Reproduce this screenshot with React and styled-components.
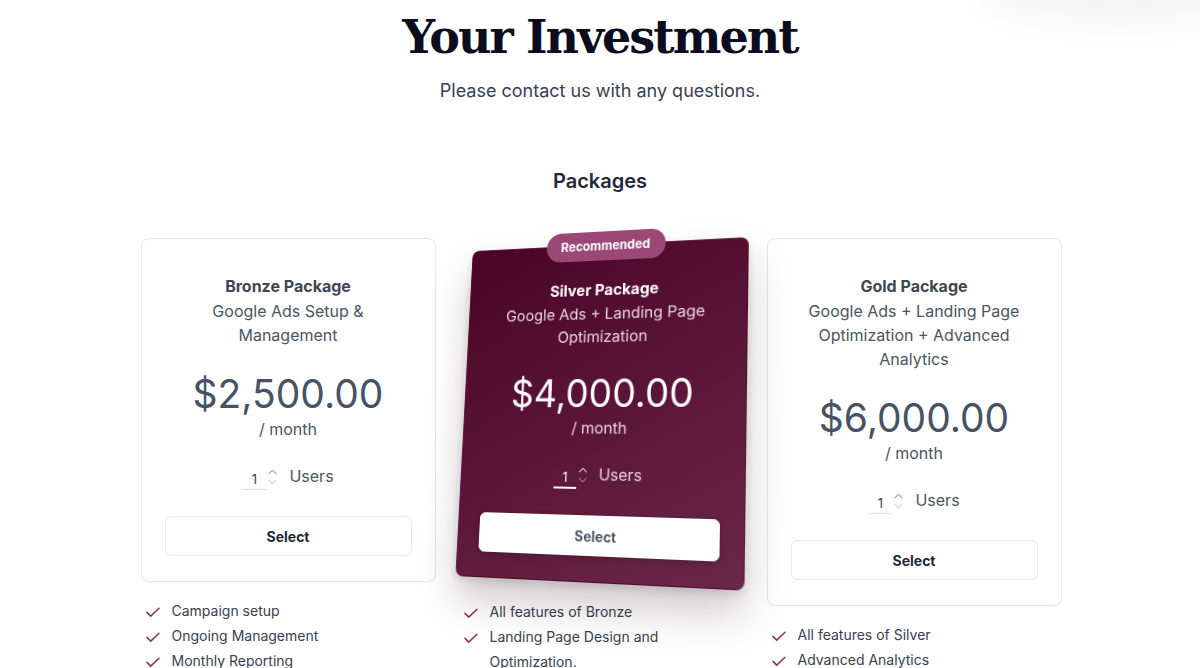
import React from "react";
import styled, { createGlobalStyle } from "styled-components";

const GlobalStyle = createGlobalStyle`
  html, body {
    margin: 0;
    padding: 0;
    background: #ffffff;
    font-family: Inter, "Noto Sans", sans-serif;
    overflow: hidden;
  }
`;

const packages = [
  {
    name: "Bronze Package",
    desc: "Google Ads Setup & Management",
    price: "$2,500.00",
    features: ["Campaign setup", "Ongoing Management", "Monthly Reporting"],
  },
  {
    name: "Silver Package",
    desc: "Google Ads + Landing Page Optimization",
    price: "$4,000.00",
    featured: true,
    features: ["All features of Bronze", "Landing Page Design and Optimization."],
  },
  {
    name: "Gold Package",
    desc: "Google Ads + Landing Page Optimization + Advanced Analytics",
    price: "$6,000.00",
    features: ["All features of Silver", "Advanced Analytics"],
  },
];

const Check = () => (
  <svg width="18" height="18" viewBox="0 0 24 24" fill="none" stroke="#8e2f62" strokeWidth="2" strokeLinecap="round" strokeLinejoin="round">
    <path d="M4 12.5l5 5L20 7" />
  </svg>
);

const Chevron = ({ up, color }) => (
  <svg width="9" height="6" viewBox="0 0 10 6" fill="none" stroke={color} strokeWidth="1.2" strokeLinecap="round" strokeLinejoin="round">
    {up ? <path d="M1 5l4-4 4 4" /> : <path d="M1 1l4 4 4-4" />}
  </svg>
);

const App = () => {
  return (
    <>
      <GlobalStyle />
      <TopGlow />
      <Page>
        <Title>Your Investment</Title>
        <Lead>Please contact us with any questions.</Lead>
        <SectionTitle>Packages</SectionTitle>
        <Grid>
          {packages.map((p) => (
            <Column key={p.name} $featured={p.featured}>
              <Card $featured={p.featured}>
                {p.featured && <Badge>Recommended</Badge>}
                <PackName $featured={p.featured}>{p.name}</PackName>
                <PackDesc $featured={p.featured}>{p.desc}</PackDesc>
                <Price $featured={p.featured}>{p.price}</Price>
                <Per $featured={p.featured}>/ month</Per>
                <UsersRow $featured={p.featured}>
                  <Qty $featured={p.featured}>1</Qty>
                  <Spinner>
                    <Chevron up color={p.featured ? "#e9c9d8" : "#9ca3af"} />
                    <Chevron color={p.featured ? "#a77990" : "#d1d5db"} />
                  </Spinner>
                  <span>Users</span>
                </UsersRow>
                <SelectButton $featured={p.featured}>Select</SelectButton>
              </Card>
              <Features $featured={p.featured}>
                {p.features.map((f) => (
                  <Feature key={f}>
                    <Check />
                    <span>{f}</span>
                  </Feature>
                ))}
              </Features>
            </Column>
          ))}
        </Grid>
      </Page>
    </>
  );
};

const TopGlow = styled.div`
  position: absolute;
  top: -40px;
  right: -60px;
  width: 280px;
  height: 64px;
  border-radius: 50%;
  background: #f5f5f5;
  filter: blur(14px);
  pointer-events: none;
`;

const Page = styled.div`
  position: relative;
  width: 100%;
  display: flex;
  flex-direction: column;
  align-items: center;
  padding-top: 8px;
`;

const Title = styled.h1`
  margin: 0;
  font-family: "DejaVu Serif", "Liberation Serif", serif;
  font-weight: 700;
  font-size: 46px;
  line-height: 58px;
  letter-spacing: -1.9px;
  color: #0b0d1f;
`;

const Lead = styled.p`
  margin: 11px 0 0;
  font-size: 18px;
  line-height: 28px;
  color: #374151;
`;

const SectionTitle = styled.h2`
  margin: 62px 0 0;
  font-size: 20px;
  line-height: 28px;
  font-weight: 600;
  color: #1f2937;
`;

const Grid = styled.div`
  display: grid;
  grid-template-columns: repeat(3, 295px);
  column-gap: 18px;
  margin-top: 43px;
  align-items: start;
  transform: translateX(1px);
`;

const Column = styled.div`
  display: flex;
  flex-direction: column;
  position: relative;
  z-index: ${(p) => (p.$featured ? 2 : 1)};
`;

const Card = styled.div`
  position: relative;
  box-sizing: border-box;
  display: flex;
  flex-direction: column;
  align-items: center;
  text-align: center;
  padding: 36px 23px 25px;
  border-radius: 8px;
  border: 1px solid ${(p) => (p.$featured ? "transparent" : "#e5e7eb")};
  background: ${(p) =>
    p.$featured ? "linear-gradient(150deg, #4a0424 0%, #5a1438 50%, #6a2849 100%)" : "#ffffff"};
  box-shadow: ${(p) =>
    p.$featured ? "0 22px 40px rgba(40, 10, 25, 0.22), 0 4px 10px rgba(0,0,0,0.12)" : "0 1px 2px rgba(0,0,0,0.03)"};
  transform: ${(p) =>
    p.$featured
      ? "translate(-2px, -1px) perspective(900px) rotateX(8deg) rotateY(-15deg) rotateZ(2deg) scale(0.99)"
      : "none"};
`;

const Badge = styled.div`
  position: absolute;
  top: -15px;
  left: 50%;
  transform: translateX(-50%);
  padding: 7px 16px;
  border-radius: 16px;
  background: #9b4877;
  color: #ffffff;
  font-size: 13px;
  line-height: 17px;
  font-weight: 700;
  white-space: nowrap;
`;

const PackName = styled.div`
  font-size: 16px;
  line-height: 22px;
  font-weight: 700;
  color: ${(p) => (p.$featured ? "#ffffff" : "#3f4653")};
`;

const PackDesc = styled.div`
  max-width: 220px;
  margin-top: 2px;
  font-size: 16px;
  line-height: 24px;
  color: ${(p) => (p.$featured ? "#ead3de" : "#4b5563")};
`;

const Price = styled.div`
  margin-top: 23px;
  font-size: 39px;
  line-height: 48px;
  font-weight: 400;
  color: ${(p) => (p.$featured ? "#ffffff" : "#475264")};
`;

const Per = styled.div`
  margin-top: -1px;
  font-size: 16px;
  line-height: 24px;
  color: ${(p) => (p.$featured ? "#ead3de" : "#4b5563")};
`;

const UsersRow = styled.div`
  display: flex;
  align-items: center;
  margin-top: 20px;
  font-size: 16px;
  line-height: 24px;
  color: ${(p) => (p.$featured ? "#ead3de" : "#4b5563")};
`;

const Qty = styled.span`
  display: inline-block;
  width: 24px;
  text-align: center;
  font-size: 13px;
  line-height: 20px;
  padding-top: 2px;
  border-bottom: ${(p) => (p.$featured ? "2px solid #ffffff" : "1px solid #d7dce3")};
  margin-top: 6px;
  color: ${(p) => (p.$featured ? "#ffffff" : "#374151")};
`;

const Spinner = styled.span`
  display: flex;
  flex-direction: column;
  gap: 4px;
  margin: 0 12px 0 2px;
  padding-top: 2px;
`;

const SelectButton = styled.button`
  align-self: stretch;
  margin-top: 26px;
  height: 40px;
  border-radius: 6px;
  border: 1px solid ${(p) => (p.$featured ? "#ffffff" : "#e5e7eb")};
  background: #ffffff;
  font-family: Inter, sans-serif;
  font-size: 14px;
  font-weight: 700;
  color: ${(p) => (p.$featured ? "#4b5563" : "#1f2937")};
  box-shadow: ${(p) => (p.$featured ? "0 2px 6px rgba(0,0,0,0.2)" : "none")};
  cursor: pointer;
`;

const Features = styled.ul`
  list-style: none;
  margin: 16px 0 0;
  padding: 0 0 0 ${(p) => (p.$featured ? "8px" : "3px")};
  max-width: 240px;
`;

const Feature = styled.li`
  display: flex;
  align-items: flex-start;
  gap: 10px;
  font-size: 14px;
  line-height: 25px;
  color: #374151;

  svg {
    flex: none;
    margin-top: 5px;
  }
`;

export default App;
